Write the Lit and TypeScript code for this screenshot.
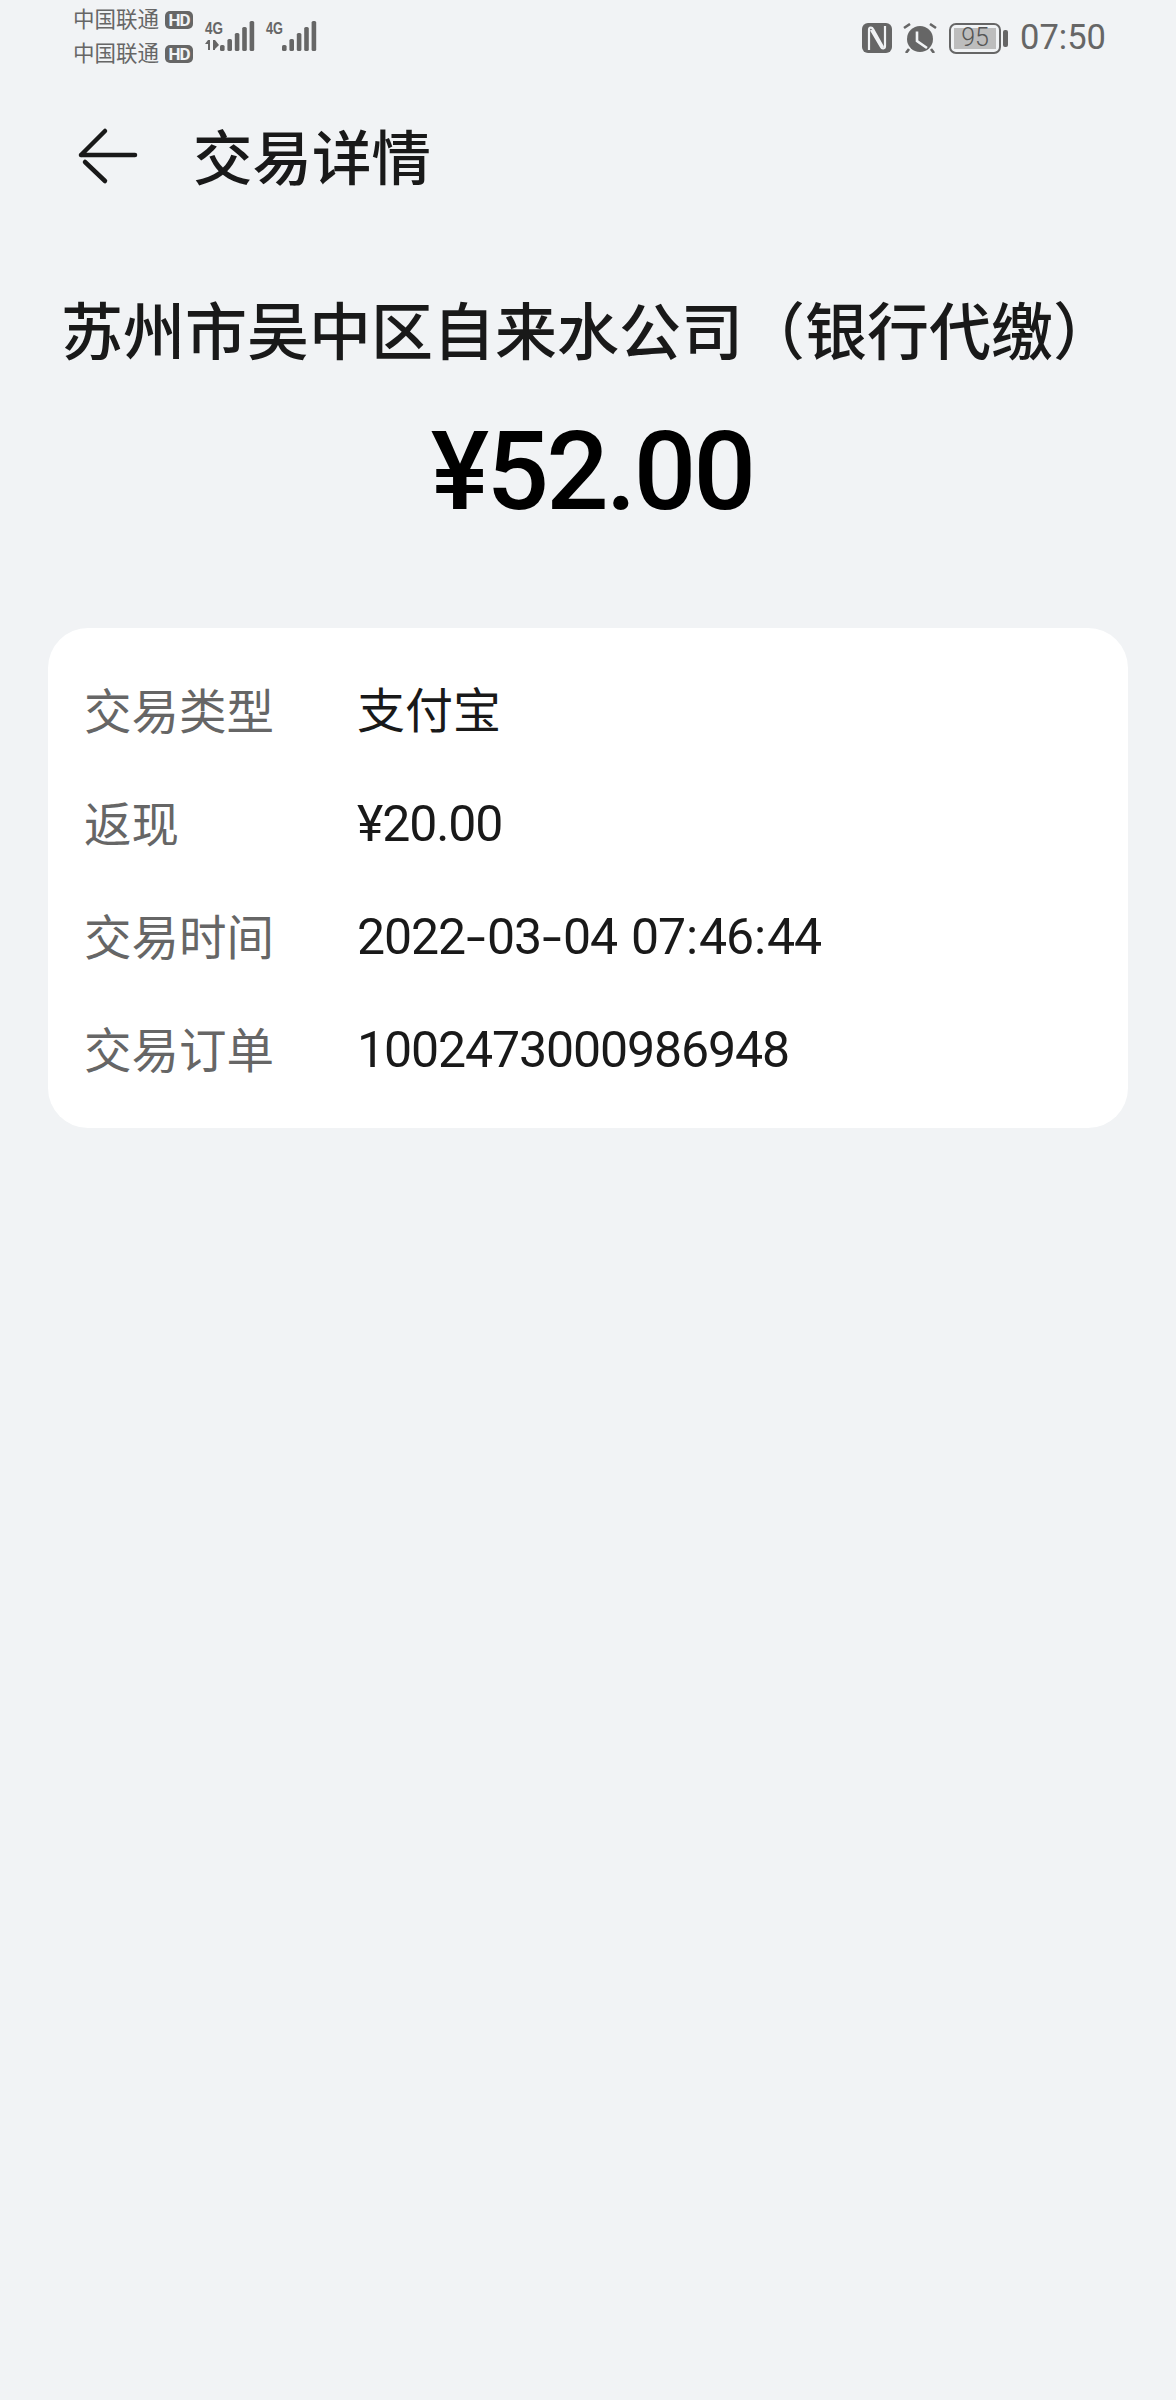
import { LitElement, html, css, svg } from "lit";
import { customElement } from "lit/decorators.js";

const rows = [
  { label: "交易类型", value: "支付宝", cjk: true },
  { label: "返现", value: "¥20.00" },
  { label: "交易时间", value: "2022-03-04 07:46:44" },
  { label: "交易订单", value: "1002473000986948" },
];

const bars = (heights: number[]) =>
  heights.map(
    (h, i) => svg`<rect x=${i * 7.4} y=${30 - h} width="4.6" height=${h} rx="1.6"></rect>`
  );

// the reference font draws wider dashes and colons than Roboto
const valueParts = (value: string) =>
  value.split(/([-:])/).map((part) => {
    if (part === "-") return html`<span class="dash">-</span>`;
    if (part === ":") return html`<span class="colon">:</span>`;
    return part;
  });

@customElement("app-root")
export class AppRoot extends LitElement {
  static styles = css`
    :host {
      display: block;
      width: 1176px;
      height: 2400px;
      background: #f1f3f5;
      font-family: Roboto, "Noto Sans CJK SC", sans-serif;
      color: #191919;
      overflow: hidden;
    }
    .status {
      height: 72px;
      display: flex;
      justify-content: space-between;
      align-items: flex-start;
      padding: 0 70px 0 73px;
      color: #666;
    }
    .status-left {
      display: flex;
      gap: 9px;
      padding-top: 6px;
    }
    .carriers {
      display: flex;
      flex-direction: column;
      gap: 6px;
      margin-right: 3px;
    }
    .carrier {
      display: flex;
      align-items: center;
      gap: 6px;
      height: 28px;
      line-height: 28px;
      font-size: 21.5px;
      white-space: nowrap;
    }
    .hd {
      background: #666;
      color: #f1f3f5;
      font-size: 17px;
      font-weight: 700;
      letter-spacing: -1px;
      line-height: 18px;
      height: 18px;
      width: 28px;
      border-radius: 5px;
      text-align: center;
    }
    .signal {
      display: block;
      margin-top: 15px;
      fill: #666;
      overflow: visible;
    }
    .signal text {
      font-family: "Liberation Sans", sans-serif;
      font-size: 16.5px;
      font-weight: 700;
    }
    .status-right {
      display: flex;
      align-items: center;
      gap: 12px;
      padding-top: 21px;
    }
    .nfc {
      margin-right: -1px;
    }
    .time {
      font-size: 34.5px;
      line-height: 36px;
      margin-top: -2px;
    }
    .battery {
      display: flex;
      align-items: center;
      gap: 2px;
    }
    .battery-body {
      width: 52px;
      height: 31px;
      box-sizing: border-box;
      border: 2.5px solid #666;
      border-radius: 7px;
      padding: 3px;
      display: flex;
    }
    .battery-fill {
      flex: 1;
      background: #bdbdbd;
      font-size: 25px;
      font-weight: 300;
      line-height: 20px;
      text-align: center;
      color: #555;
    }
    .battery-cap {
      width: 5px;
      height: 17px;
      background: #666;
      border-radius: 2px;
    }
    .header {
      display: flex;
      align-items: center;
      height: 84px;
      padding-left: 76px;
      margin-top: 41px;
    }
    .back {
      display: block;
      width: 64px;
      height: 60px;
    }
    .header h1 {
      margin: 0 0 0 53px;
      padding-top: 10px;
      font-size: 59.5px;
      font-weight: 500;
      line-height: 84px;
    }
    .merchant {
      margin: 95px 0 0;
      text-align: center;
      font-size: 62px;
      font-weight: 500;
      line-height: 84px;
      white-space: nowrap;
    }
    .amount {
      margin-top: 31px;
      padding-left: 8px;
      text-align: center;
      font-size: 110px;
      font-weight: 500;
      letter-spacing: -2.8px;
      line-height: 130px;
      color: #000;
    }
    .card {
      margin: 91px 48px 0;
      height: 500px;
      box-sizing: border-box;
      background: #fff;
      border-radius: 40px;
      padding: 25px 36px;
    }
    .row {
      display: grid;
      grid-template-columns: 273px 1fr;
      align-items: center;
      height: 113px;
    }
    .label {
      color: #666;
      font-size: 47.5px;
      padding-bottom: 2px;
    }
    .value {
      font-size: 50px;
      letter-spacing: -1.1px;
      word-spacing: 2.7px;
      padding-top: 3px;
    }
    .value.cjk {
      font-size: 48px;
      letter-spacing: 0;
      padding-top: 0;
      padding-bottom: 5px;
    }
    .dash,
    .colon {
      display: inline-block;
      text-align: center;
      letter-spacing: 0;
    }
    .dash {
      width: 22px;
      transform: scaleX(1.4);
    }
    .colon {
      width: 14px;
    }
  `;

  render() {
    return html`
      <div class="status">
        <div class="status-left">
          <div class="carriers">
            <div class="carrier">中国联通<span class="hd">HD</span></div>
            <div class="carrier">中国联通<span class="hd">HD</span></div>
          </div>
          <svg class="signal" width="52" height="30" viewBox="0 0 52 30">
            <text x="0" y="12.5" textLength="18" lengthAdjust="spacingAndGlyphs">4G</text>
            <path d="M3 19h2v10H3v-6H0zM8 19h2v10H8zM10 19l4 5-4 4z"></path>
            <g transform="translate(15 0)">${bars([6, 12, 18, 24, 30])}</g>
          </svg>
          <svg class="signal" width="52" height="30" viewBox="0 0 52 30">
            <text x="0" y="12.5" textLength="17" lengthAdjust="spacingAndGlyphs">4G</text>
            <g transform="translate(16 0)">${bars([6, 12, 18, 24, 30])}</g>
          </svg>
        </div>
        <div class="status-right">
          <svg class="nfc" width="30" height="30" viewBox="0 0 30 30">
            <rect width="30" height="30" rx="6" fill="#666"></rect>
            <path
              d="M7 27V7c0-3 3-3 4-1l10 18M23 3v20c0 3-3 3-4 1L9 7"
              fill="none"
              stroke="#f1f3f5"
              stroke-width="2.2"
            ></path>
          </svg>
          <svg width="34" height="30" viewBox="0 0 34 30">
            <circle cx="17" cy="16" r="13" fill="#666"></circle>
            <path d="M1 5l6-4M33 5l-6-4M6 26l-3 4M28 26l3 4" stroke="#666" stroke-width="2.6"></path>
            <path d="M14 8.5v9.5l10 7" fill="none" stroke="#f1f3f5" stroke-width="2.6"></path>
          </svg>
          <div class="battery">
            <div class="battery-body"><div class="battery-fill">95</div></div>
            <div class="battery-cap"></div>
          </div>
          <span class="time">07:50</span>
        </div>
      </div>
      <div class="header">
        <svg class="back" viewBox="0 0 64 60">
          <path
            d="M5 30h54M29 6L5 30M9 37l20 19"
            fill="none"
            stroke="#191919"
            stroke-width="4.5"
            stroke-linecap="round"
            stroke-linejoin="round"
          ></path>
        </svg>
        <h1>交易详情</h1>
      </div>
      <div class="merchant">苏州市吴中区自来水公司（银行代缴）</div>
      <div class="amount">¥52.00</div>
      <div class="card">
        ${rows.map(
          (r) => html`
            <div class="row">
              <span class="label">${r.label}</span>
              <span class="value ${r.cjk ? "cjk" : ""}">${valueParts(r.value)}</span>
            </div>
          `
        )}
      </div>
    `;
  }
}
